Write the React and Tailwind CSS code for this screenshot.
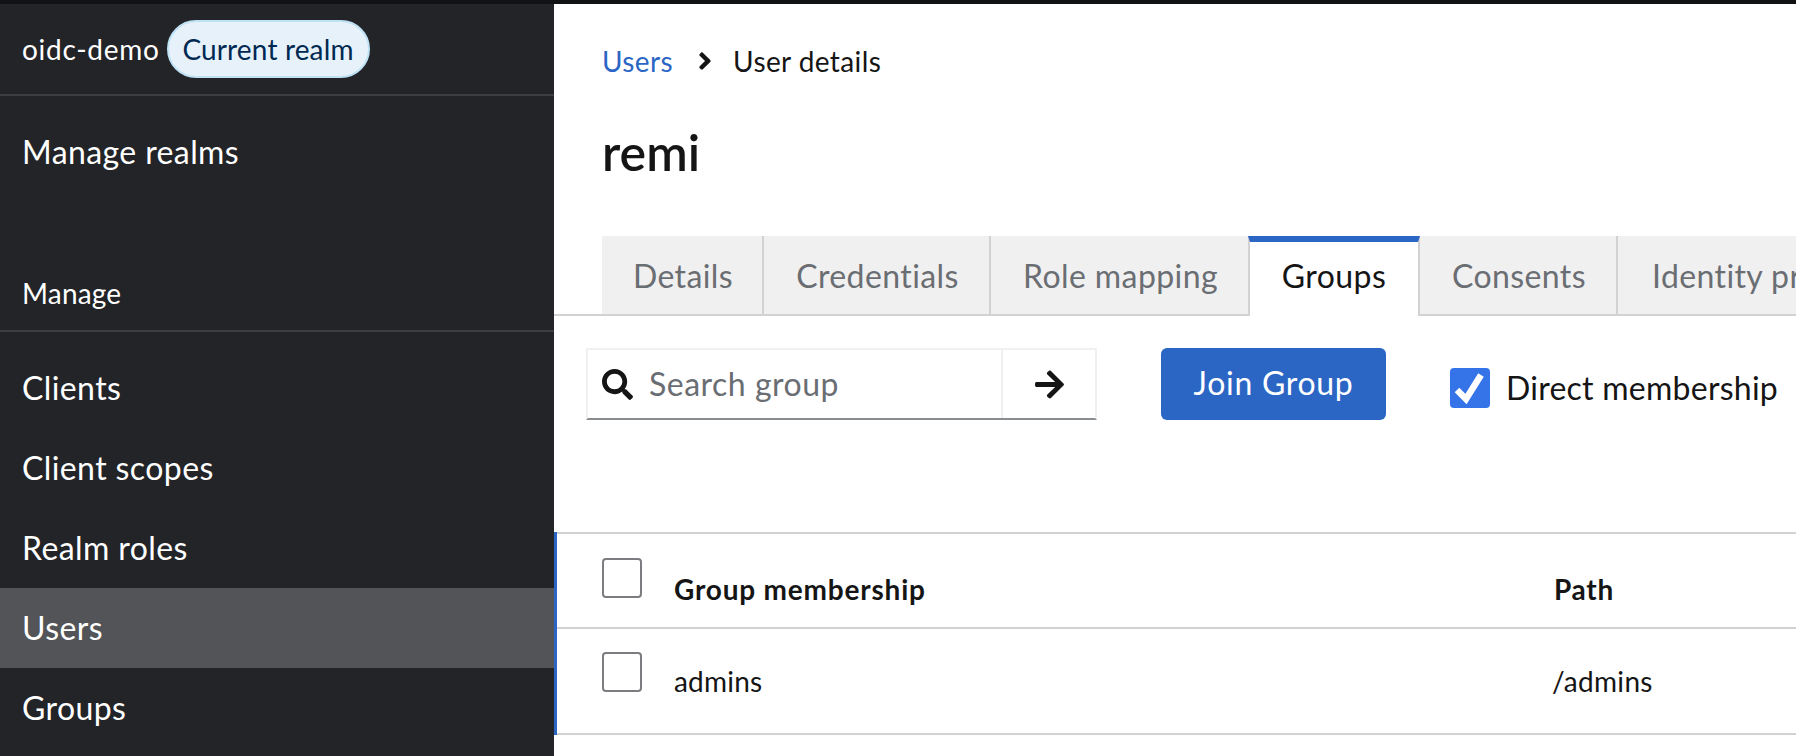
import React from "react";
import { FaSearch, FaArrowRight, FaAngleRight } from "react-icons/fa";

function Tab({ label, active, noBorder, className = "" }) {
  return active ? (
    <div className={`flex h-[80px] shrink-0 items-center justify-center bg-white border-t-[6px] border-t-[#2b66c5] border-x-2 border-x-[#d2d2d2] text-[#151515] pb-[6px] ${className}`}>
      {label}
    </div>
  ) : (
    <div className={`flex h-[78px] shrink-0 items-center justify-center bg-[#f0f0f0] pl-[2px] pt-[2px] text-[#6a6e73] whitespace-nowrap ${noBorder ? "" : "border-r-2 border-r-[#d2d2d2]"} ${className}`}>
      {label}
    </div>
  );
}

function Box() {
  return <div className="h-[40px] w-[40px] rounded-[4px] border-2 border-[#7b7d80] bg-white" />;
}

export default function App() {
  const nav = ["Clients", "Client scopes", "Realm roles", "Users", "Groups"];
  return (
    <div className="h-[756px] w-full overflow-hidden bg-white font-['Lato','Noto_Sans',sans-serif] text-[#151515]">
      <div className="h-[4px] bg-[#101214]" />
      <div className="flex h-[752px]">
        <aside className="w-[554px] shrink-0 bg-[#222428] text-white">
          <div className="flex h-[92px] items-center border-b-2 border-[#3c3f42] pl-[22px]">
            <span className="mr-[7px] text-[28px] tracking-[0.7px]">oidc-demo</span>
            <span className="flex h-[58px] w-[203px] items-center justify-center rounded-full border-2 border-[#bee1f4] bg-[#e7f1fa] text-[28px] tracking-[0.15px] text-[#002952]">Current realm</span>
          </div>
          <div className="flex h-[112px] items-center pl-[22px] text-[32px] tracking-[0.4px]">Manage realms</div>
          <div className="flex h-[124px] items-end border-b-2 border-[#3c3f42] pb-[16px] pl-[22px] text-[28px] tracking-[0.2px]">Manage</div>
          <nav className="pt-[16px]">
            {nav.map((n) => (
              <div key={n} className={`flex h-[80px] items-center pb-[1px] pl-[22px] text-[32px] tracking-[0.4px] ${n === "Users" ? "bg-[#525458]" : ""}`}>{n}</div>
            ))}
          </nav>
        </aside>
        <main className="min-w-0 flex-1">
          <div className="h-[232px] pl-[48px]">
            <div className="flex h-[116px] items-center pb-[2px] text-[28px] tracking-[0.4px]">
              <span className="text-[#2b66c5]">Users</span>
              <FaAngleRight className="ml-[18px] mr-[14px] text-[28px] text-[#151515]" />
              <span>User details</span>
            </div>
            <h1 className="flex h-[64px] items-center text-[50px] font-semibold">remi</h1>
          </div>
          <div className="flex h-[80px] border-b-2 border-[#d2d2d2] pl-[48px] text-[32px] tracking-[0.4px]">
            <Tab label="Details" className="w-[162px]" />
            <Tab label="Credentials" className="w-[227px]" />
            <Tab label="Role mapping" noBorder className="w-[257px]" />
            <Tab label="Groups" active className="w-[172px]" />
            <Tab label="Consents" className="w-[198px]" />
            <div className="flex h-[78px] w-[360px] shrink-0 items-center whitespace-nowrap bg-[#f0f0f0] pl-[34px] pt-[2px] text-[#6a6e73]">Identity provider links</div>
          </div>
          <div className="flex h-[216px] items-start pl-[32px] pt-[32px]">
            <div className="flex h-[72px] w-[511px] border-2 border-[#f0f0f0] border-b-[#8a8d90]">
              <div className="flex w-[415px] items-center border-r-2 border-[#f0f0f0] pl-[14px] text-[32px] tracking-[0.5px] text-[#6a6e73]">
                <FaSearch className="mr-[16px] text-[31px] text-[#151515]" />
                Search group
              </div>
              <div className="flex flex-1 items-center justify-center"><FaArrowRight className="text-[33px] text-[#151515]" /></div>
            </div>
            <button className="ml-[64px] h-[72px] w-[225px] rounded-[6px] bg-[#2b66c5] pb-[2px] text-[32px] tracking-[0.7px] text-white">Join Group</button>
            <div className="ml-[64px] mt-[20px] flex h-[40px] items-center">
              <div className="flex h-[40px] w-[40px] items-center justify-center rounded-[4px] bg-[#3573e8]">
                <svg viewBox="0 0 40 40" className="h-[40px] w-[40px]" fill="none" stroke="white" strokeWidth="6.5">
                  <path d="M7 22 L16 31 L31 7" />
                </svg>
              </div>
              <span className="ml-[16px] whitespace-nowrap text-[32px] tracking-[0.25px]">Direct membership</span>
            </div>
          </div>
          <div className="border-l-[3px] border-l-[#2b66c5] text-[28px]">
            <div className="flex h-[97px] border-y-2 border-[#d2d2d2]">
              <div className="w-[117px] pl-[45px] pt-[24px]"><Box /></div>
              <div className="w-[880px] pt-[33px] font-bold leading-[44px] tracking-[0.8px]">Group membership</div>
              <div className="pt-[33px] font-bold leading-[44px] tracking-[0.7px]">Path</div>
            </div>
            <div className="flex h-[106px] border-b-2 border-[#d2d2d2]">
              <div className="w-[117px] pl-[45px] pt-[23px]"><Box /></div>
              <div className="w-[878px] pt-[30px] leading-[44px] tracking-[0.2px]">admins</div>
              <div className="pt-[30px] leading-[44px] tracking-[0.3px]">/admins</div>
            </div>
          </div>
        </main>
      </div>
    </div>
  );
}
